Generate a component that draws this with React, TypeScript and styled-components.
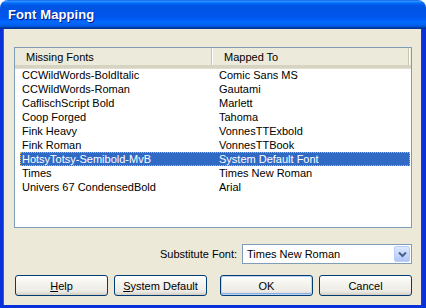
import { FC } from "react";
import styled, { createGlobalStyle } from "styled-components";

const rows: [string, string][] = [
  ["CCWildWords-BoldItalic", "Comic Sans MS"],
  ["CCWildWords-Roman", "Gautami"],
  ["CaflischScript Bold", "Marlett"],
  ["Coop Forged", "Tahoma"],
  ["Fink Heavy", "VonnesTTExbold"],
  ["Fink Roman", "VonnesTTBook"],
  ["HotsyTotsy-Semibold-MvB", "System Default Font"],
  ["Times", "Times New Roman"],
  ["Univers 67 CondensedBold", "Arial"],
];

const SELECTED = 6;

const App: FC = () => {
  return (
    <>
      <GlobalStyle />
      <Window>
        <TitleBar>Font Mapping</TitleBar>
        <Body>
          <ListBox>
            <Header>
              <HeaderCell width={198}>Missing Fonts</HeaderCell>
              <HeaderCell width={197}>Mapped To</HeaderCell>
            </Header>
            {rows.map(([missing, mapped], i) => (
              <Row key={missing} selected={i === SELECTED}>
                <Cell width={197}>{missing}</Cell>
                <Cell width={190}>{mapped}</Cell>
              </Row>
            ))}
          </ListBox>

          <SubstituteRow>
            <Label>Substitute Font:</Label>
            <Combo>
              <ComboText>Times New Roman</ComboText>
              <ComboArrow>
                <svg width="9" height="7" viewBox="0 0 9 7">
                  <path d="M1 1.5 L4.5 5 L8 1.5" fill="none" stroke="#4D6185" strokeWidth="2" />
                </svg>
              </ComboArrow>
            </Combo>
          </SubstituteRow>

          <ButtonRow>
            <Group>
              <Button>
                <u>H</u>elp
              </Button>
              <Button>
                <u>S</u>ystem Default
              </Button>
            </Group>
            <Group>
              <Button primary>OK</Button>
              <Button>Cancel</Button>
            </Group>
          </ButtonRow>
        </Body>
      </Window>
    </>
  );
};

export default App;

const GlobalStyle = createGlobalStyle`
  body {
    margin: 0;
    background: #ffffff;
    font-family: "Liberation Sans", Arial, sans-serif;
    font-size: 11px;
  }
`;

const Window = styled.div`
  width: 426px;
  height: 308px;
  display: flex;
  flex-direction: column;
  overflow: hidden;
  border-radius: 8px 8px 0 0;
`;

const TitleBar = styled.div`
  height: 29px;
  flex: none;
  box-sizing: border-box;
  padding: 0 0 0 8px;
  display: flex;
  align-items: center;
  color: #fff;
  font-size: 13px;
  font-weight: bold;
  letter-spacing: 0.1px;
  text-shadow: 1px 1px #0a1883;
  background: linear-gradient(
    to bottom,
    #0058ee 0%,
    #3a93ff 4%,
    #288eff 6%,
    #127dff 8%,
    #036ffc 10%,
    #0262ee 14%,
    #0057e5 20%,
    #0054e3 24%,
    #0055eb 56%,
    #005bf5 66%,
    #026afe 76%,
    #0062ef 86%,
    #0052d6 92%,
    #0040ab 94%,
    #003092 100%
  );
`;

const Body = styled.div`
  flex: 1;
  background: #ece9d8;
  border-style: solid;
  border-color: #0831d9;
  border-width: 0 4px 3px 3px;
  box-shadow: inset 1px 0 #166aee, inset -1px 0 #0a43d5;
  padding: 18px 10px 9px 11px;
  display: flex;
  flex-direction: column;
`;

const ListBox = styled.div`
  height: 181px;
  box-sizing: border-box;
  border: 1px solid #7f9db9;
  background: #fff;
`;

const Header = styled.div`
  display: flex;
  height: 20px;
  box-sizing: border-box;
  background: #ebeadb;
  border-bottom: 3px solid #d6d3c3;
  box-shadow: 0 1px #e2decd;
`;

const HeaderCell = styled.div<{ width: number }>`
  width: ${p => p.width}px;
  box-sizing: border-box;
  padding-left: 11px;
  line-height: 18px;
  border-right: 1px solid #ffffff;
  box-shadow: inset -1px 0 #c7c5b2;
`;

const Row = styled.div<{ selected?: boolean }>`
  display: flex;
  height: 14px;
  line-height: 14px;
  margin-left: 5px;
  margin-right: 1px;
  box-sizing: border-box;
  background: ${p => (p.selected ? "#316ac5" : "transparent")};
  color: ${p => (p.selected ? "#fff" : "#000")};
  outline: ${p => (p.selected ? "1px dotted #e8b050" : "none")};
  outline-offset: -1px;
  white-space: nowrap;
`;

const Cell = styled.div<{ width: number }>`
  width: ${p => p.width}px;
  box-sizing: border-box;
  padding-left: 2px;
  overflow: hidden;
`;

const SubstituteRow = styled.div`
  margin-top: 16px;
  display: flex;
  justify-content: flex-end;
  align-items: center;
  gap: 5px;
`;

const Label = styled.span`
  color: #000;
`;

const Combo = styled.div`
  width: 170px;
  height: 20px;
  box-sizing: border-box;
  border: 1px solid #7f9db9;
  background: #fff;
  display: flex;
  align-items: center;
  justify-content: space-between;
  padding: 0 1px 0 4px;
`;

const ComboText = styled.span`
  font-size: 11px;
`;

const ComboArrow = styled.div`
  width: 16px;
  height: 16px;
  box-sizing: border-box;
  border: 1px solid #b9cdfb;
  border-radius: 2px;
  background: linear-gradient(to bottom, #dde8ff 0%, #c2d5fc 60%, #b1c6f7 100%);
  display: flex;
  align-items: center;
  justify-content: center;
`;

const ButtonRow = styled.div`
  margin-top: 11px;
  display: flex;
  justify-content: space-between;
  padding-left: 1px;
`;

const Group = styled.div`
  display: flex;
  gap: 6px;
`;

const Button = styled.button<{ primary?: boolean }>`
  width: 93px;
  height: 21px;
  padding: 0;
  font-family: "Liberation Sans", Arial, sans-serif;
  font-size: 11px;
  color: #000;
  border: 1px solid #003c74;
  border-radius: 3px;
  background: linear-gradient(to bottom, #ffffff 0%, #f4f3ee 40%, #ecebe6 80%, #d6d0c5 100%);
  box-shadow: ${p =>
    p.primary
      ? "inset 0 0 0 1px #bcd4f6, inset 0 -1px 0 1px #89ade4"
      : "inset 0 -1px #d6d0c5"};

  & u {
    text-decoration: underline;
  }
`;
